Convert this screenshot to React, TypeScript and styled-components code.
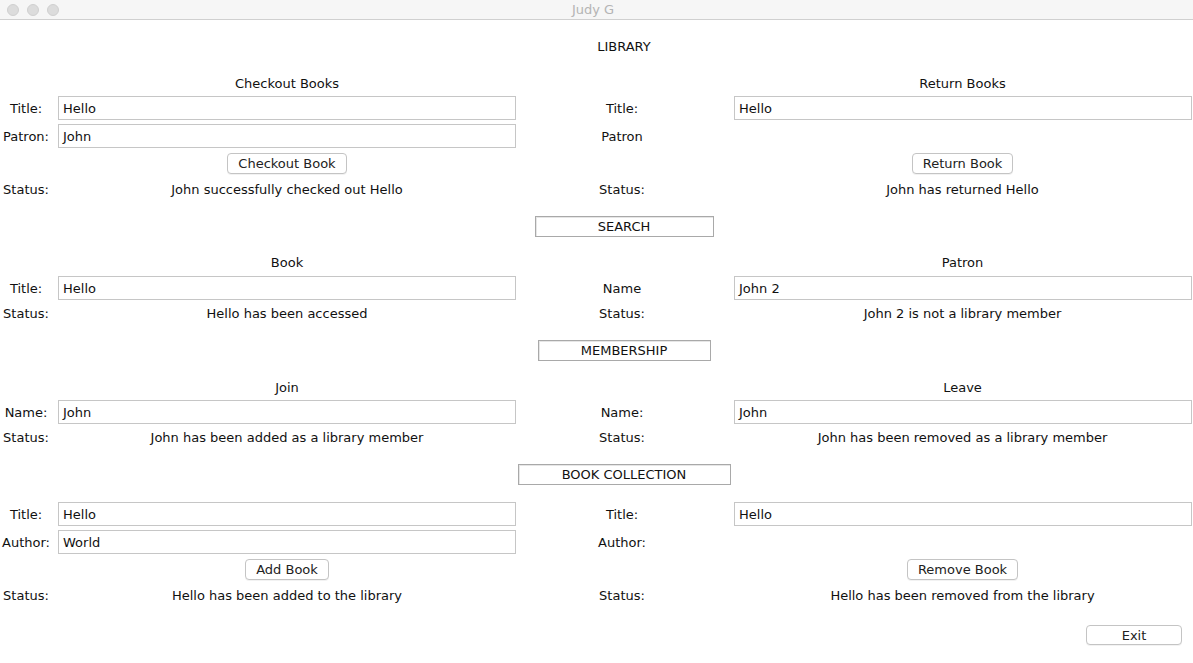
import styled, { createGlobalStyle } from "styled-components";

const GlobalStyle = createGlobalStyle`
  html, body {
    margin: 0;
    padding: 0;
    background: #ffffff;
  }
  body {
    font-family: "DejaVu Sans", "Liberation Sans", sans-serif;
    font-size: 13px;
    color: #111111;
  }
`;

const Window = styled.div`
  width: 1193px;
  height: 663px;
  overflow: hidden;
  display: flex;
  flex-direction: column;
  background: #ffffff;
`;

const TitleBar = styled.div`
  height: 19px;
  flex: none;
  display: flex;
  align-items: center;
  background: #f6f6f6;
  border-bottom: 1px solid #d0d0d0;
`;

const Lights = styled.div`
  display: flex;
  gap: 8px;
  padding-left: 7px;
`;

const Light = styled.span`
  width: 12px;
  height: 12px;
  border-radius: 50%;
  background: #dcdcdc;
  border: 0.5px solid #d0d0d0;
  box-sizing: border-box;
`;

const WindowTitle = styled.div`
  flex: 1;
  text-align: center;
  margin-right: 66px;
  color: #b4b4b4;
  font-size: 13px;
`;

const Body = styled.div`
  display: flex;
  flex-direction: column;
`;

const Row = styled.div<{ $h: number }>`
  display: grid;
  grid-template-columns: 52px 470px 206px 465px;
  height: ${(p) => p.$h}px;
  align-items: center;
`;

const Banner = styled.div<{ $h: number }>`
  height: ${(p) => p.$h}px;
  display: flex;
  align-items: center;
  justify-content: center;
  padding-left: 55px;
`;

// $nudge shifts the centred text sideways (negative = left)
const Cell = styled.div<{ $nudge?: number }>`
  display: flex;
  justify-content: center;
  align-items: center;
  white-space: nowrap;
  padding-left: ${(p) => Math.max(0, (p.$nudge ?? 0) * 2)}px;
  padding-right: ${(p) => Math.max(0, -(p.$nudge ?? 0) * 2)}px;
`;

const Entry = styled.div`
  width: 458px;
  height: 24px;
  box-sizing: border-box;
  margin-left: 6px;
  border: 1px solid #c6c6c6;
  display: flex;
  align-items: center;
  padding-left: 4px;
  background: #ffffff;
`;

const Button = styled.button`
  font-family: inherit;
  font-size: 13px;
  color: #222222;
  height: 21px;
  padding: 0 10px;
  background: #ffffff;
  border: 1px solid #c4c4c4;
  border-radius: 4px;
  box-shadow: 0 1px 0 rgba(0, 0, 0, 0.05);
`;

const SectionBox = styled.div<{ $w: number }>`
  width: ${(p) => p.$w}px;
  height: 21px;
  box-sizing: border-box;
  border: 1px solid #a9a9a9;
  box-shadow: inset 1px 1px 0 #e6e6e6;
  display: flex;
  align-items: center;
  justify-content: center;
  font-size: 13px;
`;

const ExitCell = styled.div`
  display: flex;
  justify-content: flex-end;
  padding-right: 11px;
`;

const ExitButton = styled(Button)`
  width: 96px;
  height: 20px;
`;

const MID = -3;
const RIGHT = 2;

function FieldRow({
  h,
  left,
  leftValue,
  right,
  rightValue,
}: {
  h: number;
  left: string;
  leftValue?: string;
  right: string;
  rightValue?: string;
}) {
  return (
    <Row $h={h}>
      <Cell>{left}</Cell>
      {leftValue !== undefined ? <Entry>{leftValue}</Entry> : <div />}
      <Cell $nudge={MID}>{right}</Cell>
      {rightValue !== undefined ? <Entry>{rightValue}</Entry> : <div />}
    </Row>
  );
}

function TextRow({ h, left, right }: { h: number; left: string; right: string }) {
  return (
    <Row $h={h}>
      <div />
      <Cell>{left}</Cell>
      <div />
      <Cell $nudge={RIGHT}>{right}</Cell>
    </Row>
  );
}

function StatusRow({ h, left, right }: { h: number; left: string; right: string }) {
  return (
    <Row $h={h}>
      <Cell>Status:</Cell>
      <Cell>{left}</Cell>
      <Cell $nudge={MID}>Status:</Cell>
      <Cell $nudge={RIGHT}>{right}</Cell>
    </Row>
  );
}

function ButtonRow({ h, left, right }: { h: number; left: string; right: string }) {
  return (
    <Row $h={h}>
      <div />
      <Cell>
        <Button>{left}</Button>
      </Cell>
      <div />
      <Cell $nudge={RIGHT}>
        <Button>{right}</Button>
      </Cell>
    </Row>
  );
}

function App() {
  return (
    <Window>
      <GlobalStyle />
      <TitleBar>
        <Lights>
          <Light />
          <Light />
          <Light />
        </Lights>
        <WindowTitle>Judy G</WindowTitle>
      </TitleBar>
      <Body>
        <Banner $h={52}>LIBRARY</Banner>
        <TextRow h={22} left="Checkout Books" right="Return Books" />
        <FieldRow h={28} left="Title:" leftValue="Hello" right="Title:" rightValue="Hello" />
        <FieldRow h={28} left="Patron:" leftValue="John" right="Patron" />
        <ButtonRow h={26} left="Checkout Book" right="Return Book" />
        <StatusRow h={26} left="John successfully checked out Hello" right="John has returned Hello" />

        <Banner $h={48}>
          <SectionBox $w={179}>SEARCH</SectionBox>
        </Banner>
        <TextRow h={25} left="Book" right="Patron" />
        <FieldRow h={26} left="Title:" leftValue="Hello" right="Name" rightValue="John 2" />
        <StatusRow h={24} left="Hello has been accessed" right="John 2 is not a library member" />

        <Banner $h={50}>
          <SectionBox $w={173}>MEMBERSHIP</SectionBox>
        </Banner>
        <TextRow h={24} left="Join" right="Leave" />
        <FieldRow h={26} left="Name:" leftValue="John" right="Name:" rightValue="John" />
        <StatusRow
          h={24}
          left="John has been added as a library member"
          right="John has been removed as a library member"
        />

        <Banner $h={50}>
          <SectionBox $w={213}>BOOK COLLECTION</SectionBox>
        </Banner>
        <FieldRow h={30} left="Title:" leftValue="Hello" right="Title:" rightValue="Hello" />
        <FieldRow h={26} left="Author:" leftValue="World" right="Author:" />
        <ButtonRow h={28} left="Add Book" right="Remove Book" />
        <StatusRow
          h={24}
          left="Hello has been added to the library"
          right="Hello has been removed from the library"
        />

        <Row $h={56}>
          <div />
          <div />
          <div />
          <ExitCell>
            <ExitButton>Exit</ExitButton>
          </ExitCell>
        </Row>
      </Body>
    </Window>
  );
}

export default App;
